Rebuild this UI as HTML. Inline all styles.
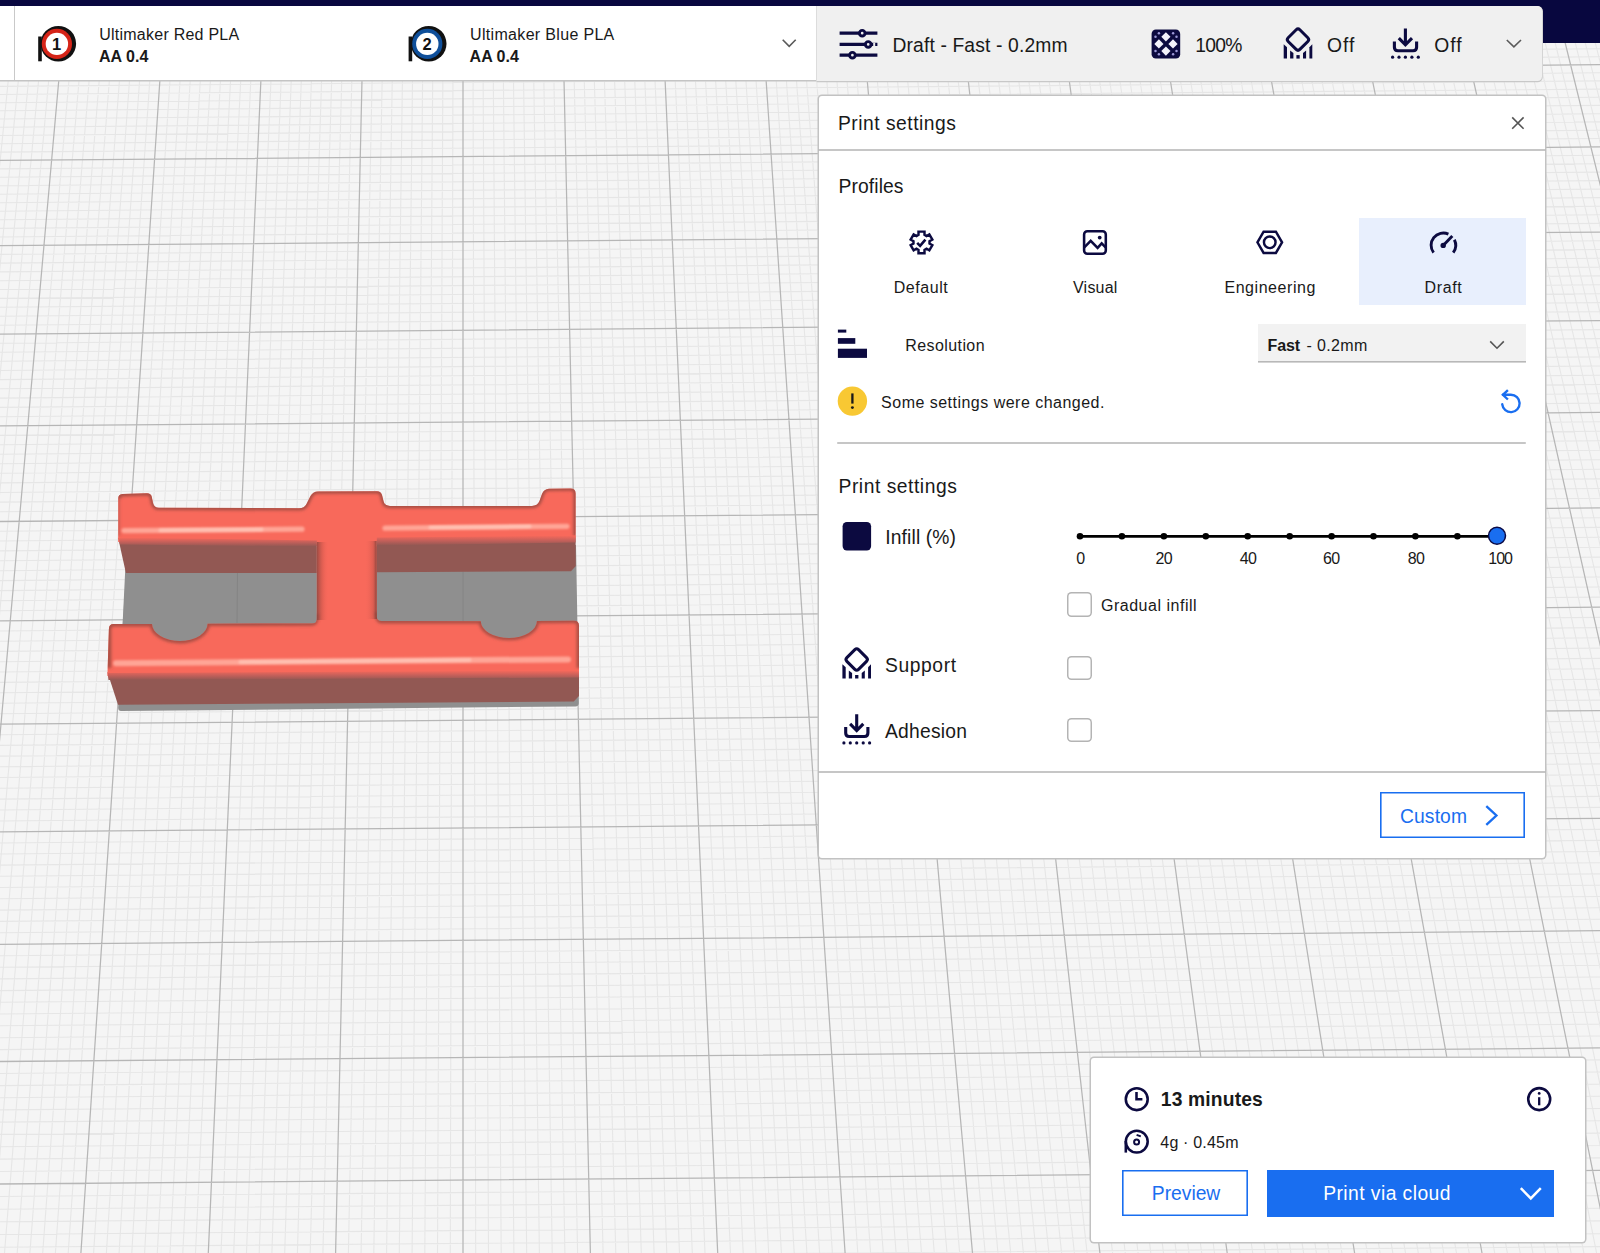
<!DOCTYPE html><html lang="en"><head><meta charset="utf-8"><title>UltiMaker Cura</title><style>
html,body{margin:0;padding:0}
body{width:1600px;height:1253px;position:relative;overflow:hidden;background:#f5f5f5;font-family:"Liberation Sans", sans-serif;color:#191919}
.abs,.t,svg.l{position:absolute}
.t{white-space:pre;display:block}
svg.l{left:0;top:0;overflow:visible;pointer-events:none}
.panel{position:absolute;background:#fff;box-shadow:0 0 0 1.5px #c2c2c2;border-radius:3px}
.hr{position:absolute;height:0;box-shadow:0 0 0 0.8px #b9b9b9}
.cb{position:absolute;width:24.6px;height:24.6px;box-shadow:inset 0 0 0 1.5px #b4b4b4;border-radius:4.5px;background:#fff}
.btn{position:absolute;box-shadow:inset 0 0 0 1.6px #196ef0;background:#fff}
</style></head><body><svg class="l" id="viewport" width="1600" height="1253" viewBox="0 0 1600 1253"><path d="M-3.4 0L-135.6 1253M6.5 0L-122.9 1253M16.4 0L-110.2 1253M26.3 0L-97.4 1253M36.3 0L-84.7 1253M46.2 0L-72.0 1253M56.1 0L-59.2 1253M76.0 0L-33.7 1253M85.9 0L-21.0 1253M95.8 0L-8.3 1253M105.7 0L4.5 1253M115.7 0L17.2 1253M125.6 0L29.9 1253M135.5 0L42.7 1253M145.4 0L55.4 1253M155.4 0L68.2 1253M175.2 0L93.6 1253M185.1 0L106.4 1253M195.1 0L119.1 1253M205.0 0L131.8 1253M214.9 0L144.6 1253M224.8 0L157.3 1253M234.7 0L170.0 1253M244.7 0L182.8 1253M254.6 0L195.5 1253M274.4 0L221.0 1253M284.4 0L233.7 1253M294.3 0L246.5 1253M304.2 0L259.2 1253M314.1 0L271.9 1253M324.1 0L284.7 1253M334.0 0L297.4 1253M343.9 0L310.2 1253M353.8 0L322.9 1253M373.7 0L348.4 1253M383.6 0L361.1 1253M393.5 0L373.8 1253M403.5 0L386.6 1253M413.4 0L399.3 1253M423.3 0L412.1 1253M433.2 0L424.8 1253M443.2 0L437.5 1253M453.1 0L450.3 1253M472.9 0L475.7 1253M482.8 0L488.5 1253M492.8 0L501.2 1253M502.7 0L513.9 1253M512.6 0L526.7 1253M522.5 0L539.4 1253M532.5 0L552.2 1253M542.4 0L564.9 1253M552.3 0L577.6 1253M572.2 0L603.1 1253M582.1 0L615.8 1253M592.0 0L628.6 1253M601.9 0L641.3 1253M611.9 0L654.1 1253M621.8 0L666.8 1253M631.7 0L679.5 1253M641.6 0L692.3 1253M651.6 0L705.0 1253M671.4 0L730.5 1253M681.3 0L743.2 1253M691.3 0L756.0 1253M701.2 0L768.7 1253M711.1 0L781.4 1253M721.0 0L794.2 1253M730.9 0L806.9 1253M740.9 0L819.6 1253M750.8 0L832.4 1253M770.6 0L857.8 1253M780.6 0L870.6 1253M790.5 0L883.3 1253M800.4 0L896.1 1253M810.3 0L908.8 1253M820.3 0L921.5 1253M830.2 0L934.3 1253M840.1 0L947.0 1253M850.0 0L959.7 1253M869.9 0L985.2 1253M879.8 0L998.0 1253M889.7 0L1010.7 1253M899.7 0L1023.4 1253M909.6 0L1036.2 1253M919.5 0L1048.9 1253M929.4 0L1061.6 1253M939.4 0L1074.4 1253M949.3 0L1087.1 1253M969.1 0L1112.6 1253M979.0 0L1125.3 1253M989.0 0L1138.1 1253M998.9 0L1150.8 1253M1008.8 0L1163.5 1253M1018.7 0L1176.3 1253M1028.7 0L1189.0 1253M1038.6 0L1201.7 1253M1048.5 0L1214.5 1253M1068.4 0L1240.0 1253M1078.3 0L1252.7 1253M1088.2 0L1265.4 1253M1098.1 0L1278.2 1253M1108.1 0L1290.9 1253M1118.0 0L1303.6 1253M1127.9 0L1316.4 1253M1137.8 0L1329.1 1253M1147.8 0L1341.9 1253M1167.6 0L1367.3 1253M1177.5 0L1380.1 1253M1187.5 0L1392.8 1253M1197.4 0L1405.5 1253M1207.3 0L1418.3 1253M1217.2 0L1431.0 1253M1227.1 0L1443.7 1253M1237.1 0L1456.5 1253M1247.0 0L1469.2 1253M1266.8 0L1494.7 1253M1276.8 0L1507.4 1253M1286.7 0L1520.2 1253M1296.6 0L1532.9 1253M1306.5 0L1545.6 1253M1316.5 0L1558.4 1253M1326.4 0L1571.1 1253M1336.3 0L1583.9 1253M1346.2 0L1596.6 1253M1366.1 0L1622.1 1253M1376.0 0L1634.8 1253M1385.9 0L1647.5 1253M1395.9 0L1660.3 1253M1405.8 0L1673.0 1253M1415.7 0L1685.8 1253M1425.6 0L1698.5 1253M1435.6 0L1711.2 1253M1445.5 0L1724.0 1253M1465.3 0L1749.4 1253M1475.3 0L1762.2 1253M1485.2 0L1774.9 1253M1495.1 0L1787.6 1253M1505.0 0L1800.4 1253M1514.9 0L1813.1 1253M1524.9 0L1825.9 1253M1534.8 0L1838.6 1253M1544.7 0L1851.3 1253M1564.6 0L1876.8 1253M1574.5 0L1889.5 1253M1584.4 0L1902.3 1253M1594.3 0L1915.0 1253M1604.3 0L1927.8 1253M0 6.9L1600 -6.7M0 14.7L1600 1.1M0 22.6L1600 9.0M0 30.4L1600 16.8M0 38.4L1600 24.8M0 46.3L1600 32.7M0 54.3L1600 40.7M0 62.3L1600 48.7M0 70.3L1600 56.7M0 86.4L1600 72.8M0 94.5L1600 80.9M0 102.7L1600 89.1M0 110.8L1600 97.2M0 119.0L1600 105.4M0 127.3L1600 113.7M0 135.5L1600 121.9M0 143.8L1600 130.2M0 152.1L1600 138.5M0 168.9L1600 155.3M0 177.3L1600 163.7M0 185.7L1600 172.1M0 194.2L1600 180.6M0 202.7L1600 189.1M0 211.2L1600 197.6M0 219.8L1600 206.2M0 228.4L1600 214.8M0 237.0L1600 223.4M0 254.4L1600 240.8M0 263.1L1600 249.5M0 271.9L1600 258.3M0 280.7L1600 267.1M0 289.5L1600 275.9M0 298.4L1600 284.8M0 307.3L1600 293.7M0 316.2L1600 302.6M0 325.2L1600 311.6M0 343.2L1600 329.6M0 352.2L1600 338.6M0 361.3L1600 347.7M0 370.5L1600 356.9M0 379.6L1600 366.0M0 388.8L1600 375.2M0 398.1L1600 384.5M0 407.4L1600 393.8M0 416.7L1600 403.1M0 435.4L1600 421.8M0 444.8L1600 431.2M0 454.3L1600 440.7M0 463.8L1600 450.2M0 473.3L1600 459.7M0 482.9L1600 469.3M0 492.5L1600 478.9M0 502.1L1600 488.5M0 511.8L1600 498.2M0 531.3L1600 517.7M0 541.0L1600 527.4M0 550.9L1600 537.3M0 560.8L1600 547.2M0 570.7L1600 557.1M0 580.6L1600 567.0M0 590.6L1600 577.0M0 600.6L1600 587.0M0 610.7L1600 597.1M0 631.0L1600 617.4M0 641.2L1600 627.6M0 651.4L1600 637.8M0 661.7L1600 648.1M0 672.0L1600 658.4M0 682.4L1600 668.8M0 692.8L1600 679.2M0 703.2L1600 689.6M0 713.7L1600 700.1M0 734.8L1600 721.2M0 745.4L1600 731.8M0 756.1L1600 742.5M0 766.8L1600 753.2M0 777.5L1600 763.9M0 788.3L1600 774.7M0 799.1L1600 785.5M0 810.0L1600 796.4M0 821.0L1600 807.4M0 843.0L1600 829.4M0 854.0L1600 840.4M0 865.1L1600 851.5M0 876.3L1600 862.7M0 887.5L1600 873.9M0 898.8L1600 885.2M0 910.1L1600 896.5M0 921.4L1600 907.8M0 932.8L1600 919.2M0 955.8L1600 942.2M0 967.3L1600 953.7M0 978.9L1600 965.3M0 990.6L1600 977.0M0 1002.3L1600 988.7M0 1014.0L1600 1000.4M0 1025.8L1600 1012.2M0 1037.7L1600 1024.1M0 1049.6L1600 1036.0M0 1073.5L1600 1059.9M0 1085.6L1600 1072.0M0 1097.7L1600 1084.1M0 1109.9L1600 1096.3M0 1122.1L1600 1108.5M0 1134.4L1600 1120.8M0 1146.7L1600 1133.1M0 1159.1L1600 1145.5M0 1171.5L1600 1157.9M0 1196.5L1600 1182.9M0 1209.2L1600 1195.6M0 1221.8L1600 1208.2M0 1234.5L1600 1220.9M0 1247.3L1600 1233.7M0 1260.2L1600 1246.6M0 1273.0L1600 1259.4" stroke="#e6e6e6" stroke-width="1.1" fill="none"/><path d="M66.0 0L-46.5 1253M165.3 0L80.9 1253M264.5 0L208.3 1253M363.8 0L335.6 1253M463.0 0L463.0 1253M562.2 0L590.4 1253M661.5 0L717.7 1253M760.7 0L845.1 1253M860.0 0L972.5 1253M959.2 0L1099.9 1253M1058.4 0L1227.2 1253M1157.7 0L1354.6 1253M1256.9 0L1482.0 1253M1356.2 0L1609.3 1253M1455.4 0L1736.7 1253M1554.6 0L1864.1 1253M0 78.3L1600 64.7M0 160.5L1600 146.9M0 245.7L1600 232.1M0 334.2L1600 320.6M0 426.0L1600 412.4M0 521.5L1600 507.9M0 620.8L1600 607.2M0 724.2L1600 710.6M0 831.9L1600 818.3M0 944.3L1600 930.7M0 1061.5L1600 1047.9M0 1184.0L1600 1170.4" stroke="#b6b6b6" stroke-width="1.25" fill="none"/><defs><linearGradient id="gU" x1="0" y1="0" x2="0" y2="1"><stop offset="0" stop-color="#f8695b"/><stop offset="0.5" stop-color="#c5605a"/><stop offset="1" stop-color="#925853"/></linearGradient><linearGradient id="gCL" x1="0" y1="0" x2="1" y2="0"><stop offset="0" stop-color="#8a463f" stop-opacity="0.85"/><stop offset="0.45" stop-color="#c05248" stop-opacity="0.45"/><stop offset="1" stop-color="#f8695b" stop-opacity="0"/></linearGradient><linearGradient id="gCR" x1="1" y1="0" x2="0" y2="0"><stop offset="0" stop-color="#7a3f39" stop-opacity="0.9"/><stop offset="0.3" stop-color="#c05248" stop-opacity="0.5"/><stop offset="1" stop-color="#f8695b" stop-opacity="0"/></linearGradient><filter id="b1" filterUnits="userSpaceOnUse" x="90" y="470" width="510" height="260"><feGaussianBlur stdDeviation="0.8"/></filter><filter id="b2" filterUnits="userSpaceOnUse" x="90" y="470" width="510" height="260"><feGaussianBlur stdDeviation="1.4"/></filter><clipPath id="cTop"><path d="M118.2 499Q118.2 494.3 122.5 494.1L147 493.3Q151 493.3 151.8 497L153 503Q154 507.6 159 507.8L299 508.2Q304.5 508.2 306.5 504L310.5 496Q312.8 491.5 318 491.4L377 491.2Q381 491.2 382 495L383.6 501.5Q384.8 505.9 390 505.9L532 505.9Q537.5 505.9 539.5 501L542 494Q544 489 549 488.8L570.5 488.5Q575.6 488.5 575.6 493.5L575.6 538L376.8 541L376.8 616.5Q376.8 621 381.5 621.1L480.8 621.3A28 16.8 0 0 0 536.9 621L574 620.7Q579 620.7 579 625.5L579 675.5L107.4 676L108.9 629Q109 624.2 113.5 624.1L152 623.9A27.8 17.3 0 0 0 207.6 623.7L312 623.5Q316.8 623.5 316.8 619L316.8 546L118.2 542Z"/></clipPath></defs><path d="M126.3 548L576 545L578.8 703Q578.8 706.3 575.5 706.4L121 711Q118.3 711 118.2 708L122.6 624Z" fill="#8f8f8f"/><path d="M237.5 573L237 623M463 572L463 622" stroke="#848484" stroke-width="1"/><path d="M118.2 538L316.8 541L316.8 572.9L125.9 572.9Z" fill="#925853"/><path d="M376.8 541L575.6 537.5L575.8 566L571 571.2L376.8 572.2Z" fill="#925853"/><path d="M107.4 672L579 671.5L579 696L573.75 701.5L118 704.8Z" fill="#925853"/><path d="M118.2 499Q118.2 494.3 122.5 494.1L147 493.3Q151 493.3 151.8 497L153 503Q154 507.6 159 507.8L299 508.2Q304.5 508.2 306.5 504L310.5 496Q312.8 491.5 318 491.4L377 491.2Q381 491.2 382 495L383.6 501.5Q384.8 505.9 390 505.9L532 505.9Q537.5 505.9 539.5 501L542 494Q544 489 549 488.8L570.5 488.5Q575.6 488.5 575.6 493.5L575.6 538L376.8 541L376.8 616.5Q376.8 621 381.5 621.1L480.8 621.3A28 16.8 0 0 0 536.9 621L574 620.7Q579 620.7 579 625.5L579 675.5L107.4 676L108.9 629Q109 624.2 113.5 624.1L152 623.9A27.8 17.3 0 0 0 207.6 623.7L312 623.5Q316.8 623.5 316.8 619L316.8 546L118.2 542Z" fill="#f8695b"/><g clip-path="url(#cTop)"><path d="M118.2 499Q118.2 494.3 122.5 494.1L147 493.3Q151 493.3 151.8 497L153 503Q154 507.6 159 507.8L299 508.2Q304.5 508.2 306.5 504L310.5 496Q312.8 491.5 318 491.4L377 491.2Q381 491.2 382 495L383.6 501.5Q384.8 505.9 390 505.9L532 505.9Q537.5 505.9 539.5 501L542 494Q544 489 549 488.8L570.5 488.5Q575.6 488.5 575.6 493.5V536" fill="none" stroke="#a04a41" stroke-opacity="0.9" stroke-width="4.6" filter="url(#b2)"/><path d="M376.8 612Q376.8 621 381.5 621.1L480.8 621.3A28 16.8 0 0 0 536.9 621L574 620.7Q579 620.7 579 625.5V668M108.9 668V629Q109 624.2 113.5 624.1L152 623.9A27.8 17.3 0 0 0 207.6 623.7L312 623.5Q316.8 623.5 316.8 614" fill="none" stroke="#a04a41" stroke-opacity="0.9" stroke-width="4.6" filter="url(#b2)"/><path d="M118.2 499V536" fill="none" stroke="#a84f46" stroke-opacity="0.6" stroke-width="3" filter="url(#b2)"/><rect x="316.8" y="542" width="12" height="78" fill="url(#gCL)"/><rect x="364.8" y="541" width="12" height="78" fill="url(#gCR)"/></g><path d="M118.4 537.5L316.8 540.5L316.8 546.5L120 544.5Z" fill="url(#gU)"/><path d="M376.8 537.5L575.6 535.5L575.6 542.5L376.8 545.5Z" fill="url(#gU)"/><path d="M107.5 673L579 670.5L579 677.5L108.5 680Z" fill="url(#gU)"/><path d="M124 530.6L302 529.2" stroke="#ffa596" stroke-width="5.2" stroke-linecap="round" filter="url(#b1)"/><path d="M385 528.2L567 526.3" stroke="#ffa596" stroke-width="5.2" stroke-linecap="round" filter="url(#b1)"/><path d="M116 663.2L568 659.4" stroke="#ffa596" stroke-width="6" stroke-linecap="round" filter="url(#b1)"/><path d="M160 530.2L262 529.4M430 527.6L530 526.6M240 662L470 660.1" stroke="#ffc4b6" stroke-width="3" stroke-linecap="round" filter="url(#b1)"/></svg><div class="abs" style="left:0;top:0;width:1600px;height:6px;background:#08073f"></div><div class="abs" style="left:1536px;top:0;width:64px;height:43.2px;background:#08073f"></div><div class="abs" id="extruders" style="left:0;top:6px;width:816.5px;height:74.4px;background:#fff;box-shadow:0 1.5px 0 #c4c4c4"></div><div class="abs" style="left:14px;top:6px;width:1px;height:74px;background:#c9c9c9"></div><div class="abs" id="printsetup" style="left:816.5px;top:6px;width:725.5px;height:74.6px;background:#f0f0f0;border-radius:0 4.5px 4.5px 0;box-shadow:0 1.2px 0 #c8c8c8,1px 0.6px 0 #d4d4d4,-1px 0 0 #dcdcdc"></div><svg class="l" width="1600" height="90" viewBox="0 0 1600 90"><circle cx="58.3" cy="43.699999999999996" r="17.8" fill="#111"/><rect x="38.2" y="36.5" width="3.6" height="24.8" fill="#111"/><circle cx="56.9" cy="43.9" r="15.1" fill="#d52418"/><circle cx="56.9" cy="43.9" r="11.2" fill="#fff"/><circle cx="428.7" cy="43.699999999999996" r="17.8" fill="#111"/><rect x="408.6" y="36.5" width="3.6" height="24.8" fill="#111"/><circle cx="427.3" cy="43.9" r="15.1" fill="#0f4f9a"/><circle cx="427.3" cy="43.9" r="11.2" fill="#fff"/><path d="M782.7 39.8L789.2 46.4L795.7 39.8" fill="none" stroke="#5a5a5a" stroke-width="1.6"/><path d="M1506.8 40L1513.9 46.8L1521 40" fill="none" stroke="#5a5a5a" stroke-width="1.6"/><g stroke="#0c0a40" stroke-width="3.2" fill="#f0f0f0"><path d="M839.6 33.2H877.4M839.6 44.4H877.4M839.6 55.2H877.4" stroke-linecap="butt"/><circle cx="862.2" cy="33.2" r="2.8" stroke-width="2.9"/><circle cx="868.2" cy="44.4" r="2.8" stroke-width="2.9"/><circle cx="852.4" cy="55.2" r="2.8" stroke-width="2.9"/></g><path d="M873.2 44.4H875.2" stroke="#f0f0f0" stroke-width="3.4"/><rect x="1151.6" y="29.6" width="28.6" height="29" rx="4.3" fill="#0c0a40"/><path d="M1165.90 32.20L1170.50 36.80L1165.90 41.40L1161.30 36.80Z" fill="#f3f2fb"/><path d="M1158.90 39.30L1163.50 43.90L1158.90 48.50L1154.30 43.90Z" fill="#f3f2fb"/><path d="M1173.00 39.30L1177.60 43.90L1173.00 48.50L1168.40 43.90Z" fill="#f3f2fb"/><path d="M1165.90 46.50L1170.50 51.10L1165.90 55.70L1161.30 51.10Z" fill="#f3f2fb"/><circle cx="1158.90" cy="33.30" r="1.25" fill="#9d99d8"/><circle cx="1173.10" cy="33.30" r="1.25" fill="#9d99d8"/><circle cx="1155.50" cy="36.70" r="1.25" fill="#9d99d8"/><circle cx="1176.50" cy="36.70" r="1.25" fill="#9d99d8"/><circle cx="1155.50" cy="51.10" r="1.25" fill="#9d99d8"/><circle cx="1176.50" cy="51.10" r="1.25" fill="#9d99d8"/><circle cx="1158.90" cy="54.30" r="1.25" fill="#9d99d8"/><circle cx="1173.10" cy="54.30" r="1.25" fill="#9d99d8"/><g transform="translate(1298.0 39.6)" fill="#0c0a40"><rect x="-8.25" y="-8.25" width="16.5" height="16.5" rx="2.6" transform="rotate(45)" fill="none" stroke="#0c0a40" stroke-width="3.0"/><path d="M-14.3 4.7L-11.0 7.7L-11.0 19L-14.3 19Z"/><path d="M-7.9 11.0L-4.6 13.5L-4.6 19L-7.9 19Z"/><path d="M-1.6 15.5L1.7 15.5L1.7 19L-1.6 19Z"/><path d="M5.0 13.5L8.1 11.0L8.1 19L5.0 19Z"/><path d="M11.4 7.7L14.3 4.7L14.3 19L11.4 19Z"/></g><g transform="translate(1405.4 28.6)" fill="none" stroke="#0c0a40" stroke-width="3.1"><path d="M0 0V16.5M-6.6 9.6L0 16.2L6.6 9.6"/><path d="M-11 12.8V18.7Q-11 22.2 -7.5 22.2H7.7Q11.2 22.2 11.2 18.7V12.8"/></g><g fill="#0c0a40"><circle cx="1392.6" cy="57.2" r="1.6"/><circle cx="1399.0" cy="57.2" r="1.6"/><circle cx="1405.4" cy="57.2" r="1.6"/><circle cx="1411.9" cy="57.2" r="1.6"/><circle cx="1418.3" cy="57.2" r="1.6"/></g></svg><span class="t" style="left:52.11px;top:36.00px;font-size:16.5px;line-height:16.50px;font-weight:700;color:#111;">1</span><span class="t" style="left:422.61px;top:36.00px;font-size:16.5px;line-height:16.50px;font-weight:700;color:#111;">2</span><span class="t" style="left:99.20px;top:27.00px;font-size:16px;line-height:16.00px;letter-spacing:0.247px;">Ultimaker Red PLA</span><span class="t" style="left:99.00px;top:49.00px;font-size:16px;line-height:16.00px;font-weight:700;letter-spacing:0.019px;">AA 0.4</span><span class="t" style="left:470.00px;top:27.00px;font-size:16px;line-height:16.00px;letter-spacing:0.328px;">Ultimaker Blue PLA</span><span class="t" style="left:469.60px;top:49.00px;font-size:16px;line-height:16.00px;font-weight:700;letter-spacing:0.019px;">AA 0.4</span><span class="t" style="left:892.40px;top:36.00px;font-size:19.3px;line-height:19.30px;letter-spacing:0.143px;">Draft - Fast - 0.2mm</span><span class="t" style="left:1195.20px;top:36.00px;font-size:19.3px;line-height:19.30px;letter-spacing:-0.709px;">100%</span><span class="t" style="left:1327.00px;top:36.00px;font-size:19.3px;line-height:19.30px;letter-spacing:1.012px;">Off</span><span class="t" style="left:1434.20px;top:36.00px;font-size:19.3px;line-height:19.30px;letter-spacing:1.012px;">Off</span><div class="panel" id="settings" style="left:819px;top:96px;width:725.6px;height:762px"></div><div class="hr" style="left:819px;top:150px;width:725.6px"></div><div class="hr" style="left:819px;top:772px;width:725.6px"></div><div class="hr" style="left:838px;top:443px;width:687.4px"></div><div class="abs" style="left:1359.3px;top:217.5px;width:166.3px;height:87.8px;background:#e8effd"></div><div class="abs" style="left:1258px;top:324.4px;width:267.5px;height:36.6px;background:#f2f2f2;box-shadow:0 1.6px 0 #b8b8b8"></div><span class="t" style="left:837.90px;top:114.00px;font-size:19.3px;line-height:19.30px;letter-spacing:0.504px;">Print settings</span><span class="t" style="left:838.50px;top:177.00px;font-size:19.3px;line-height:19.30px;letter-spacing:0.100px;">Profiles</span><span class="t" style="left:893.70px;top:280.00px;font-size:16px;line-height:16.00px;letter-spacing:0.549px;">Default</span><span class="t" style="left:1073.00px;top:280.00px;font-size:16px;line-height:16.00px;letter-spacing:0.221px;">Visual</span><span class="t" style="left:1224.45px;top:280.00px;font-size:16px;line-height:16.00px;letter-spacing:0.549px;">Engineering</span><span class="t" style="left:1424.45px;top:280.00px;font-size:16px;line-height:16.00px;letter-spacing:0.657px;">Draft</span><span class="t" style="left:905.20px;top:338.00px;font-size:16px;line-height:16.00px;letter-spacing:0.421px;">Resolution</span><span class="t" style="left:1267.60px;top:338.00px;font-size:16px;line-height:16.00px;font-weight:700;letter-spacing:-0.169px;">Fast</span><span class="t" style="left:1306.40px;top:338.00px;font-size:16px;line-height:16.00px;letter-spacing:0.388px;">- 0.2mm</span><span class="t" style="left:881.10px;top:395.00px;font-size:16px;line-height:16.00px;letter-spacing:0.481px;">Some settings were changed.</span><span class="t" style="left:838.50px;top:477.00px;font-size:19.3px;line-height:19.30px;letter-spacing:0.527px;">Print settings</span><span class="t" style="left:885.30px;top:528.00px;font-size:19.3px;line-height:19.30px;letter-spacing:0.118px;">Infill (%)</span><span class="t" style="left:1101.00px;top:598.00px;font-size:16px;line-height:16.00px;letter-spacing:0.512px;">Gradual infill</span><span class="t" style="left:885.00px;top:656.00px;font-size:19.3px;line-height:19.30px;letter-spacing:0.576px;">Support</span><span class="t" style="left:885.00px;top:722.00px;font-size:19.3px;line-height:19.30px;letter-spacing:0.228px;">Adhesion</span><span class="t" style="left:1076.15px;top:551.00px;font-size:16px;line-height:16.00px;">0</span><span class="t" style="left:1155.50px;top:551.00px;font-size:16px;line-height:16.00px;letter-spacing:-0.597px;">20</span><span class="t" style="left:1239.80px;top:551.00px;font-size:16px;line-height:16.00px;letter-spacing:-0.597px;">40</span><span class="t" style="left:1322.90px;top:551.00px;font-size:16px;line-height:16.00px;letter-spacing:-0.597px;">60</span><span class="t" style="left:1407.70px;top:551.00px;font-size:16px;line-height:16.00px;letter-spacing:-0.597px;">80</span><span class="t" style="left:1488.20px;top:551.00px;font-size:16px;line-height:16.00px;letter-spacing:-0.952px;">100</span><div class="cb" style="left:1067.3px;top:592.4px"></div><div class="cb" style="left:1067.3px;top:655.7px"></div><div class="cb" style="left:1067.3px;top:717.5px"></div><div class="btn" style="left:1380px;top:792px;width:145.4px;height:46.4px"></div><span class="t" style="left:1400.00px;top:807.00px;font-size:19.3px;line-height:19.30px;color:#196ef0;letter-spacing:0.113px;">Custom</span><svg class="l" width="1600" height="900" viewBox="0 0 1600 900"><path d="M1512.2 117.4L1523.6 128.8M1523.6 117.4L1512.2 128.8" stroke="#555" stroke-width="1.6" fill="none"/><g fill="none" stroke="#0c0a40" stroke-width="2.45" stroke-linejoin="miter" stroke-miterlimit="1.5"><path d="M918.50 234.88L918.50 231.61L924.50 231.61L924.50 234.88L926.52 236.04L929.35 234.41L932.35 239.60L929.52 241.24L929.52 243.56L932.35 245.20L929.35 250.39L926.52 248.76L924.50 249.92L924.50 253.19L918.50 253.19L918.50 249.92L916.48 248.76L913.65 250.39L910.65 245.20L913.48 243.56L913.48 241.24L910.65 239.60L913.65 234.41L916.48 236.04Z"/><path d="M917.2 242.9L920.1 245.8L925.4 239.6" stroke-width="2.6"/></g><g fill="none" stroke="#0c0a40" stroke-width="2.55"><rect x="1084.1" y="231.3" width="21.7" height="22.4" rx="3.2"/><path d="M1084.3 247.4L1090.7 240.9L1097.6 247.9L1101.7 243.3L1105.6 247.3" stroke-linejoin="miter"/><circle cx="1099.7" cy="237.6" r="1.9" fill="#0c0a40" stroke="none"/></g><g fill="none" stroke="#0c0a40" stroke-width="2.45"><polygon points="1282.05,242.30 1275.90,252.95 1263.60,252.95 1257.45,242.30 1263.60,231.65 1275.90,231.65"/><circle cx="1269.75" cy="242.3" r="5.8"/></g><g fill="none" stroke="#0c0a40" stroke-width="2.9" stroke-linecap="butt"><path d="M1433.58 252.70A12.3 12.3 0 0 1 1448.40 234.06"/><path d="M1454.36 239.72A12.3 12.3 0 0 1 1453.22 252.70"/><path d="M1443.4 245.3L1452.3 236.0"/><circle cx="1443.2" cy="245.4" r="2.7" fill="#0c0a40" stroke="none"/></g><g fill="#0c0a40"><rect x="837.9" y="329.6" width="8.4" height="3"/><rect x="837.9" y="338.1" width="17.4" height="5.7"/><rect x="837.9" y="348.7" width="29.1" height="9.2"/></g><path d="M1490.2 341.4L1497 348.2L1503.8 341.4" fill="none" stroke="#555" stroke-width="1.6"/><circle cx="852.4" cy="401.1" r="14.7" fill="#f8c833"/><path d="M852.4 393.4V403.6" stroke="#191919" stroke-width="2.3"/><circle cx="852.4" cy="407.6" r="1.45" fill="#191919"/><g fill="none" stroke="#196ef0" stroke-width="2.4"><path d="M1503 394.7H1510.9A8.7 8.7 0 1 1 1502.25 404.3" stroke-linecap="round"/><path d="M1507.9 390.2L1502.9 394.75L1507.9 399.5" stroke-linejoin="miter"/></g><rect x="842.6" y="521.9" width="28.5" height="28.5" rx="4.3" fill="#0c0a40"/><path d="M1080 536.3H1497" stroke="#000" stroke-width="2.7"/><circle cx="1080.0" cy="536.3" r="3.3" fill="#000"/><circle cx="1121.9" cy="536.3" r="3.3" fill="#000"/><circle cx="1163.9" cy="536.3" r="3.3" fill="#000"/><circle cx="1205.8" cy="536.3" r="3.3" fill="#000"/><circle cx="1247.7" cy="536.3" r="3.3" fill="#000"/><circle cx="1289.7" cy="536.3" r="3.3" fill="#000"/><circle cx="1331.6" cy="536.3" r="3.3" fill="#000"/><circle cx="1373.5" cy="536.3" r="3.3" fill="#000"/><circle cx="1415.4" cy="536.3" r="3.3" fill="#000"/><circle cx="1457.4" cy="536.3" r="3.3" fill="#000"/><circle cx="1497" cy="535.7" r="8.5" fill="#196ef0" stroke="#0b0a45" stroke-width="1.5"/><g transform="translate(856.7 659.5)" fill="#0c0a40"><rect x="-8.25" y="-8.25" width="16.5" height="16.5" rx="2.6" transform="rotate(45)" fill="none" stroke="#0c0a40" stroke-width="3.0"/><path d="M-14.3 4.7L-11.0 7.7L-11.0 19L-14.3 19Z"/><path d="M-7.9 11.0L-4.6 13.5L-4.6 19L-7.9 19Z"/><path d="M-1.6 15.5L1.7 15.5L1.7 19L-1.6 19Z"/><path d="M5.0 13.5L8.1 11.0L8.1 19L5.0 19Z"/><path d="M11.4 7.7L14.3 4.7L14.3 19L11.4 19Z"/></g><g transform="translate(856.7 714.3)" fill="none" stroke="#0c0a40" stroke-width="3.1"><path d="M0 0V16.5M-6.6 9.6L0 16.2L6.6 9.6"/><path d="M-11 12.8V18.7Q-11 22.2 -7.5 22.2H7.7Q11.2 22.2 11.2 18.7V12.8"/></g><g fill="#0c0a40"><circle cx="843.9" cy="742.9" r="1.6"/><circle cx="850.3" cy="742.9" r="1.6"/><circle cx="856.7" cy="742.9" r="1.6"/><circle cx="863.2" cy="742.9" r="1.6"/><circle cx="869.6" cy="742.9" r="1.6"/></g><path d="M1486.3 806.2L1496.4 815.5L1486.3 824.8" fill="none" stroke="#196ef0" stroke-width="2.35"/></svg><div class="panel" id="action" style="left:1091.4px;top:1058.2px;width:493.2px;height:184.3px"></div><div class="btn" style="left:1122px;top:1170px;width:126px;height:46.4px"></div><div class="abs" style="left:1267px;top:1170px;width:287px;height:46.6px;background:#196ef0"></div><span class="t" style="left:1160.80px;top:1090.00px;font-size:19.3px;line-height:19.30px;font-weight:700;letter-spacing:0.141px;">13 minutes</span><span class="t" style="left:1160.30px;top:1135.00px;font-size:16px;line-height:16.00px;letter-spacing:0.191px;">4g · 0.45m</span><span class="t" style="left:1151.80px;top:1184.00px;font-size:19.3px;line-height:19.30px;color:#196ef0;letter-spacing:-0.013px;">Preview</span><span class="t" style="left:1323.20px;top:1184.00px;font-size:19.3px;line-height:19.30px;color:#fff;letter-spacing:0.442px;">Print via cloud</span><svg class="l" width="1600" height="1253" viewBox="0 0 1600 1253"><g fill="none" stroke="#0c0a40" stroke-width="2.55"><circle cx="1136.75" cy="1099.15" r="10.95"/><path d="M1136.5 1092V1099.2H1142.4" stroke-linejoin="miter"/><circle cx="1136.75" cy="1141.6" r="10.95"/><path d="M1125.8 1141V1152.6"/><circle cx="1136.6" cy="1141.9" r="2.5" stroke-width="2"/><path d="M1136.6 1134.9L1140.8 1136.4" stroke-width="2"/><circle cx="1539.2" cy="1099.1" r="11"/><path d="M1539.2 1097.2V1105.3" stroke-width="2.3"/><circle cx="1539.2" cy="1093.4" r="1.4" fill="#0c0a40" stroke="none"/></g><path d="M1520.8 1188.2L1530.8 1198.4L1540.8 1188.2" fill="none" stroke="#fff" stroke-width="2.5"/></svg></body></html>
